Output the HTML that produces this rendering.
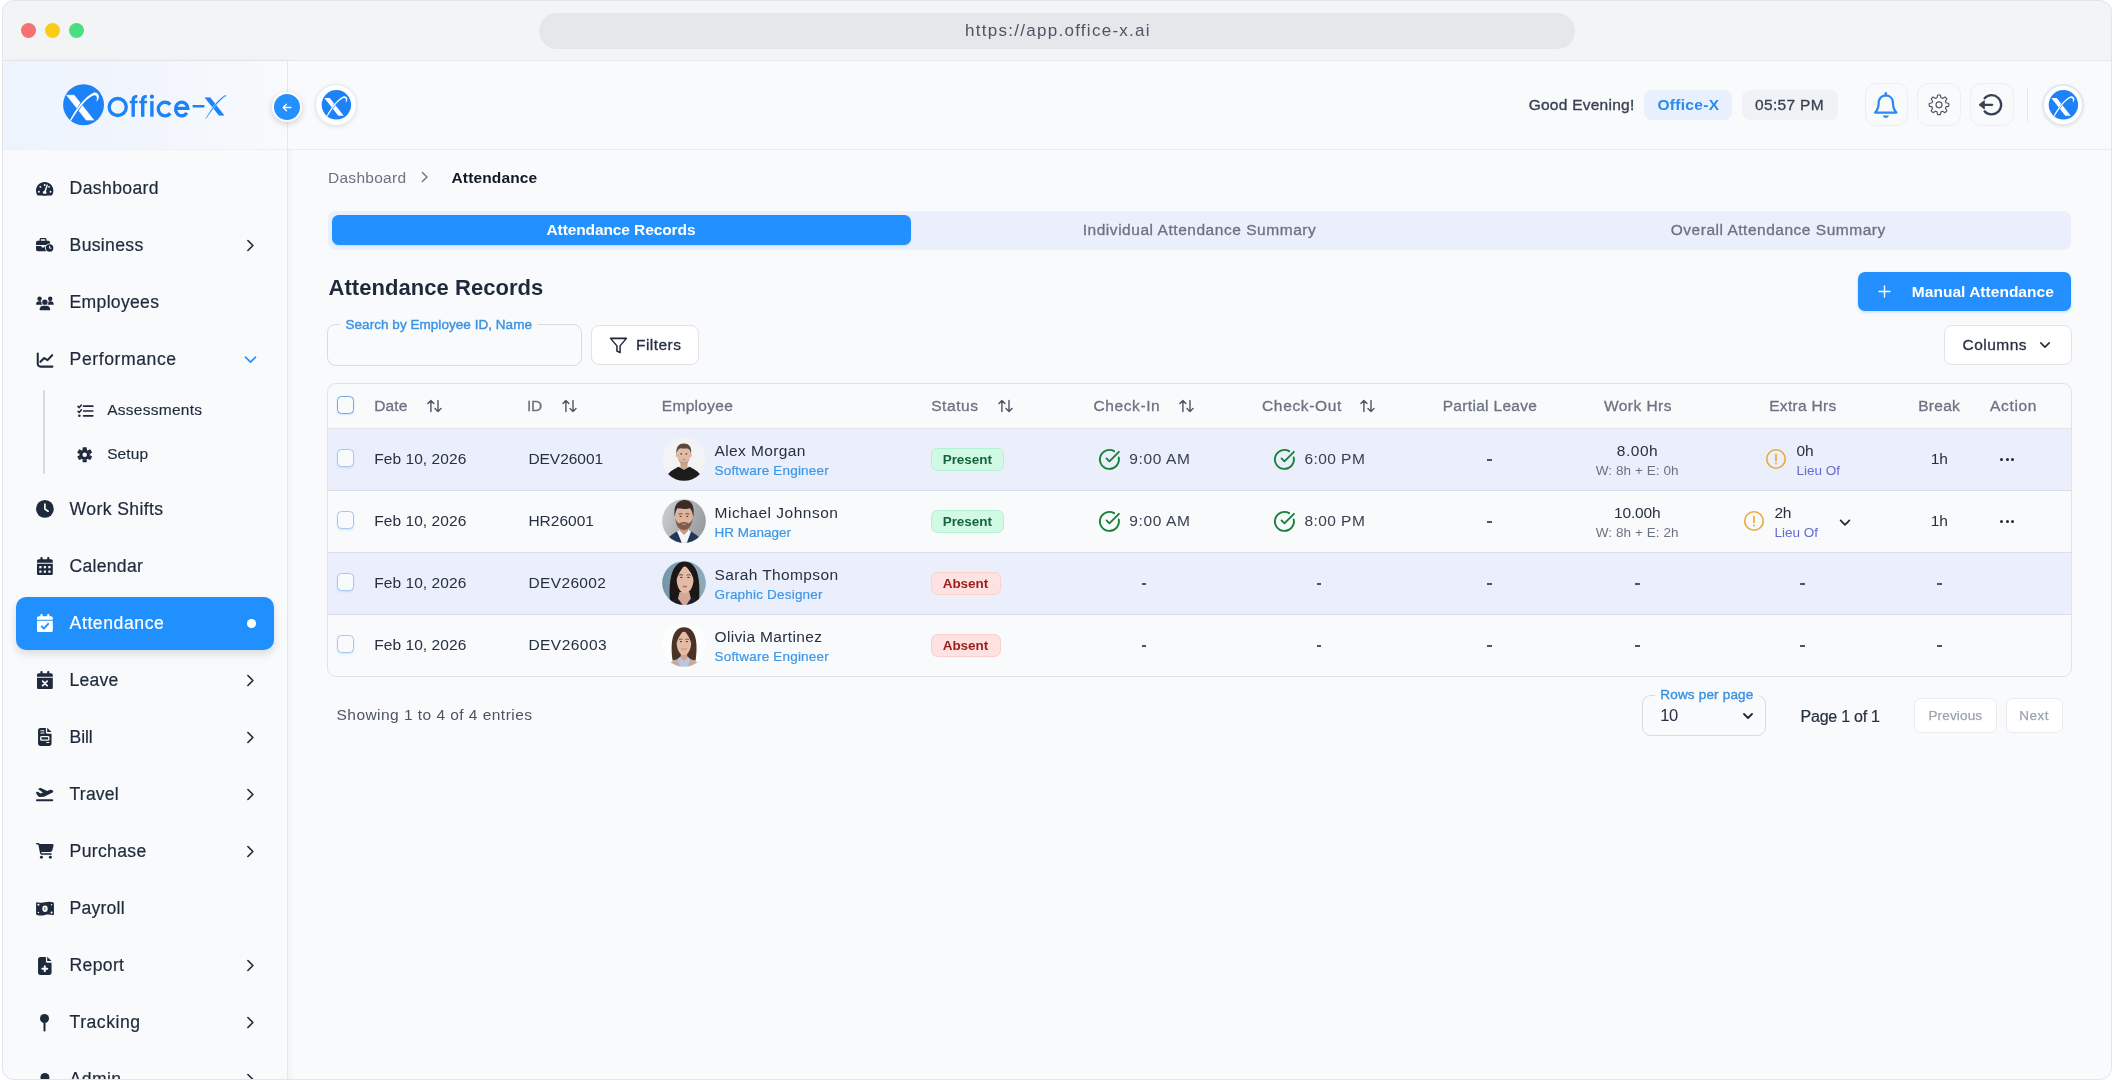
<!DOCTYPE html>
<html lang="en">
<head>
<meta charset="utf-8">
<title>Office-X Attendance</title>
<style>
*{box-sizing:border-box;margin:0;padding:0}
html,body{width:2114px;height:1080px;overflow:hidden;background:#fff}
body{font-family:"Liberation Sans",sans-serif;color:#1e293b;position:relative;-webkit-font-smoothing:antialiased}
.abs{position:absolute}
.t{position:absolute;white-space:nowrap;line-height:1;letter-spacing:.04em}
svg{position:absolute;overflow:visible}
#wrap{position:absolute;left:0;top:0;width:2114px;height:1080px;will-change:transform;transform:translateZ(0)}
/* window */
#bg{position:absolute;left:2px;top:0;width:2110px;height:1080px;background:#f8fafc;border-radius:12px}
#titlebar{position:absolute;left:2px;top:0;width:2110px;height:61px;background:#f3f4f6;border-bottom:1px solid #e5e7eb;border-radius:12px 12px 0 0}
.dot{position:absolute;top:23px;width:15px;height:15px;border-radius:50%}
#url{position:absolute;left:539px;top:13px;width:1036px;height:36px;border-radius:18px;background:#e5e7eb}
#frame{position:absolute;left:2px;top:0;width:2110px;height:1080px;border:1px solid #e2e5ea;border-radius:12px;box-shadow:0 0 0 30px #fff;pointer-events:none;z-index:50}
/* sidebar */
#sidebar{position:absolute;left:3px;top:61px;width:285px;height:1019px;background:#f8fafc;border-right:1px solid #e5e7eb;box-shadow:2px 0 6px rgba(15,23,42,.04)}
#logoarea{position:absolute;left:3px;top:61px;width:284px;height:89px;background:linear-gradient(90deg,#edf4fe 0%,#f1f5fc 45%,#f8fafc 100%);border-bottom:1px solid #eceff3}
#header{position:absolute;left:288px;top:61px;width:1823px;height:89px;background:#f9fafc;border-bottom:1px solid #e9ecf0}
.nav{position:absolute;left:69px;font-size:17px;line-height:20px;white-space:nowrap;color:#1e293b;letter-spacing:.042em}
.sub{position:absolute;left:106px;font-size:15px;line-height:18px;white-space:nowrap;color:#1e293b;letter-spacing:.03em}
.chev{position:absolute;left:243.6px;width:13px;height:13px;margin-top:-.5px}
#active{position:absolute;left:16px;top:597px;width:258px;height:52.5px;border-radius:10px;background:#2190ff;box-shadow:0 4px 9px rgba(15,23,42,.13)}
</style>
</head>
<body>
<div id="wrap">
<div id="bg"></div>
<div id="titlebar">
  <div class="dot" style="left:19px;background:#f87171"></div>
  <div class="dot" style="left:43px;background:#facc15"></div>
  <div class="dot" style="left:67px;background:#4ade80"></div>
</div>
<div id="url"></div>
<div class="t" style="left:965px;top:22px;font-size:17px;color:#4b5563;letter-spacing:.075em">https://app.office-x.ai</div>

<div id="sidebar"></div>
<div id="logoarea"></div>
<div id="header"></div>

<!--SIDEBAR-START-->
<!-- logo -->
<svg style="left:62px;top:84px" width="44" height="44" viewBox="0 0 44 44">
  <circle cx="21.55" cy="20.75" r="20.45" fill="#1d82f8"/>
  <path d="M4.7 11.2 L12.2 11.2 L31.8 36.1 L24.2 36.1 Z" fill="#fff" stroke="#fff" stroke-width=".6" stroke-linejoin="round"/>
  <path d="M9.6 34.4 C12.5 28.6 15 24 18 19.6 C22 14.2 26 10.2 30.6 8.2 L32.4 10.6 C28 12.6 24.5 16 21 20.6 C17.6 25.2 14.6 29.8 11.8 35.2 Z" fill="#1d82f8"/>
  <path d="M7.9 36.3 C11 30 15 24.5 19 19.3 C23 14.5 27 10.8 31 9 C33.5 8 35.8 8.8 36.8 11.6 C37.3 14 36.2 16.4 34.4 18 C35 16 35.2 13.6 34.4 12.2 C33.6 11 32 11 30.2 11.9 C26.5 13.8 23 17.2 20 21 C16 26 12.5 31 9.2 36.6 Z" fill="#fff"/>
</svg>
<svg style="left:107px;top:88px;overflow:hidden" width="119.6" height="36" viewBox="0 0 119.6 36">
  <circle cx="10.72" cy="19" r="8.55" fill="none" stroke="#1d82f8" stroke-width="3.35"/>
  <path d="M24.5 28.7 V12 C24.5 8.5 26.5 6.7 30.3 6.9 V9.7 C28.7 9.5 27.9 10.4 27.9 12.2 V28.7 Z" fill="#1d82f8"/><rect x="22.7" y="12.8" width="7.9" height="2.55" rx=".6" fill="#1d82f8"/>
  <path d="M34 28.7 V12 C34 8.5 36 6.7 39.8 6.9 V9.7 C38.2 9.5 37.4 10.4 37.4 12.2 V28.7 Z" fill="#1d82f8"/><rect x="32.2" y="12.8" width="7.9" height="2.55" rx=".6" fill="#1d82f8"/>
  <rect x="43.2" y="13.1" width="3.4" height="15.6" fill="#1d82f8"/>
  <circle cx="44.95" cy="8.7" r="2.1" fill="#1d82f8"/>
  <path d="M63.26 16.68 A6.8 6.8 0 1 0 63.26 25.42" fill="none" stroke="#1d82f8" stroke-width="3.35"/>
  <path d="M68.53 20.3 H80.87 A6.17 6.82 0 1 0 79.82 24.86" fill="none" stroke="#1d82f8" stroke-width="3.2"/>
  <rect x="85.6" y="17" width="11.85" height="2.6" rx=".5" fill="#1d82f8"/>
  <path d="M98 9.7 L103.3 9.7 L117 27.3 L112 27.3 Z" fill="#1d82f8" stroke="#1d82f8" stroke-width=".5" stroke-linejoin="round"/>
  <path d="M98.2 31.1 C103 22.5 109.5 12.5 117.5 7.2 C118.5 6.7 119.5 7.5 119.7 8.9 C118.9 8.4 118.2 8.5 117.6 8.9 C110.8 14 104.8 22.6 98.9 31.3 Z" fill="#1d82f8" stroke="#f5f8fd" stroke-width=".5"/>
</svg>

<!-- collapse btn + small logo -->
<div class="abs" style="left:272px;top:92px;width:30px;height:30px;border-radius:50%;background:#fff;box-shadow:0 2px 6px rgba(15,23,42,.18);z-index:5"></div>
<div class="abs" style="left:274px;top:94px;width:26px;height:26px;border-radius:50%;background:#2490ff;z-index:6"></div>
<svg style="left:282px;top:103px;z-index:7" width="10" height="9" viewBox="0 0 10 9"><path d="M9 4.5H1.5M4.5 1.2L1.2 4.5l3.3 3.3" fill="none" stroke="#fff" stroke-width="1.3" stroke-linecap="round" stroke-linejoin="round"/></svg>
<div class="abs" style="left:315px;top:84px;width:42px;height:42px;border-radius:50%;background:#fff;border:1px solid #e6e9ef;box-shadow:0 1px 4px rgba(15,23,42,.10)"></div>
<svg style="left:321px;top:89.5px" width="30" height="30" viewBox="0 0 42 42">
  <circle cx="21.55" cy="20.75" r="20.6" fill="#1d82f8"/>
  <path d="M4.7 11.2 L12.2 11.2 L31.8 36.1 L24.2 36.1 Z" fill="#fff"/>
  <path d="M9.6 34.4 C12.5 28.6 15 24 18 19.6 C22 14.2 26 10.2 30.6 8.2 L32.4 10.6 C28 12.6 24.5 16 21 20.6 C17.6 25.2 14.6 29.8 11.8 35.2 Z" fill="#1d82f8"/>
  <path d="M7.9 36.3 C11 30 15 24.5 19 19.3 C23 14.5 27 10.8 31 9 C33.5 8 35.8 8.8 36.8 11.6 C37.3 14 36.2 16.4 34.4 18 C35 16 35.2 13.6 34.4 12.2 C33.6 11 32 11 30.2 11.9 C26.5 13.8 23 17.2 20 21 C16 26 12.5 31 9.2 36.6 Z" fill="#fff"/>
</svg>

<!-- nav text -->
<div class="abs" style="left:42.6px;top:390px;width:2.2px;height:84px;background:#d6dae1;border-radius:1px"></div>
<div id="active"></div>
<div class="abs" style="left:247.3px;top:619.2px;width:8.6px;height:8.6px;border-radius:50%;background:#fff"></div>

<!--NAV-START-->
<div class="t" style="left:69.60px;top:180.20px;font-size:17.6px;color:#1e293b;letter-spacing:0.365px;-webkit-text-stroke:0.2px #1e293b;">Dashboard</div><div class="t" style="left:69.60px;top:237.20px;font-size:17.6px;color:#1e293b;letter-spacing:0.316px;-webkit-text-stroke:0.2px #1e293b;">Business</div><div class="t" style="left:69.60px;top:294.20px;font-size:17.6px;color:#1e293b;letter-spacing:0.294px;-webkit-text-stroke:0.2px #1e293b;">Employees</div><div class="t" style="left:69.60px;top:351.20px;font-size:17.6px;color:#1e293b;letter-spacing:0.578px;-webkit-text-stroke:0.2px #1e293b;">Performance</div><div class="t" style="left:69.60px;top:501.20px;font-size:17.6px;color:#1e293b;letter-spacing:0.388px;-webkit-text-stroke:0.2px #1e293b;">Work Shifts</div><div class="t" style="left:69.60px;top:558.20px;font-size:17.6px;color:#1e293b;letter-spacing:0.256px;-webkit-text-stroke:0.2px #1e293b;">Calendar</div><div class="t" style="left:69.60px;top:615.20px;font-size:17.6px;color:#fff;letter-spacing:0.585px;-webkit-text-stroke:0.2px #fff;">Attendance</div><div class="t" style="left:69.60px;top:672.20px;font-size:17.6px;color:#1e293b;letter-spacing:0.191px;-webkit-text-stroke:0.2px #1e293b;">Leave</div><div class="t" style="left:69.60px;top:729.20px;font-size:17.6px;color:#1e293b;letter-spacing:-0.156px;-webkit-text-stroke:0.2px #1e293b;">Bill</div><div class="t" style="left:69.60px;top:786.20px;font-size:17.6px;color:#1e293b;letter-spacing:0.173px;-webkit-text-stroke:0.2px #1e293b;">Travel</div><div class="t" style="left:69.60px;top:843.20px;font-size:17.6px;color:#1e293b;letter-spacing:0.325px;-webkit-text-stroke:0.2px #1e293b;">Purchase</div><div class="t" style="left:69.60px;top:900.20px;font-size:17.6px;color:#1e293b;letter-spacing:0.203px;-webkit-text-stroke:0.2px #1e293b;">Payroll</div><div class="t" style="left:69.60px;top:957.20px;font-size:17.6px;color:#1e293b;letter-spacing:0.317px;-webkit-text-stroke:0.2px #1e293b;">Report</div><div class="t" style="left:69.60px;top:1014.20px;font-size:17.6px;color:#1e293b;letter-spacing:0.513px;-webkit-text-stroke:0.2px #1e293b;">Tracking</div><div class="t" style="left:69.60px;top:1071.20px;font-size:17.6px;color:#1e293b;letter-spacing:0.406px;-webkit-text-stroke:0.2px #1e293b;">Admin</div><div class="t" style="left:107.20px;top:401.75px;font-size:15.5px;color:#1e293b;letter-spacing:0.263px;-webkit-text-stroke:0.15px #1e293b;">Assessments</div><div class="t" style="left:107.20px;top:445.75px;font-size:15.5px;color:#1e293b;letter-spacing:0.096px;-webkit-text-stroke:0.15px #1e293b;">Setup</div>
<!--NAV-END-->
<!-- chevrons -->
<svg class="chev" style="top:239px" viewBox="0 0 12 12"><path d="M3.6 1.4L8.2 6 3.6 10.6" fill="none" stroke="#1e293b" stroke-width="1.5" stroke-linecap="round" stroke-linejoin="round"/></svg>
<svg class="chev" style="top:353.5px" viewBox="0 0 12 12"><path d="M1.4 3.8L6 8.4 10.6 3.8" fill="none" stroke="#2490ff" stroke-width="1.5" stroke-linecap="round" stroke-linejoin="round"/></svg>
<svg class="chev" style="top:674px" viewBox="0 0 12 12"><path d="M3.6 1.4L8.2 6 3.6 10.6" fill="none" stroke="#1e293b" stroke-width="1.5" stroke-linecap="round" stroke-linejoin="round"/></svg>
<svg class="chev" style="top:731px" viewBox="0 0 12 12"><path d="M3.6 1.4L8.2 6 3.6 10.6" fill="none" stroke="#1e293b" stroke-width="1.5" stroke-linecap="round" stroke-linejoin="round"/></svg>
<svg class="chev" style="top:788px" viewBox="0 0 12 12"><path d="M3.6 1.4L8.2 6 3.6 10.6" fill="none" stroke="#1e293b" stroke-width="1.5" stroke-linecap="round" stroke-linejoin="round"/></svg>
<svg class="chev" style="top:845px" viewBox="0 0 12 12"><path d="M3.6 1.4L8.2 6 3.6 10.6" fill="none" stroke="#1e293b" stroke-width="1.5" stroke-linecap="round" stroke-linejoin="round"/></svg>
<svg class="chev" style="top:959px" viewBox="0 0 12 12"><path d="M3.6 1.4L8.2 6 3.6 10.6" fill="none" stroke="#1e293b" stroke-width="1.5" stroke-linecap="round" stroke-linejoin="round"/></svg>
<svg class="chev" style="top:1016px" viewBox="0 0 12 12"><path d="M3.6 1.4L8.2 6 3.6 10.6" fill="none" stroke="#1e293b" stroke-width="1.5" stroke-linecap="round" stroke-linejoin="round"/></svg>
<svg class="chev" style="top:1073px" viewBox="0 0 12 12"><path d="M3.6 1.4L8.2 6 3.6 10.6" fill="none" stroke="#1e293b" stroke-width="1.5" stroke-linecap="round" stroke-linejoin="round"/></svg>
<!--ICONS-START-->
<!-- Dashboard (gauge) -->
<svg style="left:36.2px;top:181.6px" width="17.4" height="13.6" viewBox="0 32 576 448">
  <path d="M288 32C129 32 0 161 0 320c0 53 14 102 39 145 6 10 16 15 27 15h443c11 0 22-6 27-15C562 422 576 373 576 320 576 161 447 32 288 32z" fill="#1e293b"/>
  <g fill="#f8fafc"><circle cx="288" cy="128" r="32"/><circle cx="96" cy="352" r="32"/><circle cx="144" cy="192" r="32"/><circle cx="432" cy="192" r="32"/><circle cx="480" cy="352" r="32"/>
  <circle cx="288" cy="384" r="62"/><path d="M262 380 L346 128 A24 24 0 0 1 392 144 L314 390 Z"/></g>
  <rect x="226" y="420" width="124" height="60" fill="#1e293b"/>
</svg>
<!-- Business (briefcase + clock) -->
<svg style="left:36.2px;top:238.4px" width="17.6" height="14" viewBox="0 0 640 512">
  <path d="M184 48h144c4 0 8 4 8 8v40H176V56c0-4 4-8 8-8zM128 56v40H64C29 96 0 125 0 160v96h512v-96c0-35-29-64-64-64h-64V56c0-31-25-56-56-56H184c-31 0-56 25-56 56z" fill="#1e293b"/>
  <path d="M0 288h192v24c0 18 14 32 32 32h64c18 0 32-14 32-32v-24h192v128c0 35-29 64-64 64H64c-35 0-64-29-64-64z" fill="#1e293b"/>
  <circle cx="496" cy="368" r="168" fill="#f8fafc"/>
  <circle cx="496" cy="368" r="136" fill="#1e293b"/>
  <path d="M496 300v72h52" fill="none" stroke="#f8fafc" stroke-width="36" stroke-linecap="round" stroke-linejoin="round"/>
</svg>
<!-- Employees (users) -->
<svg style="left:36px;top:295.6px" width="17.8" height="14.2" viewBox="0 0 640 512">
  <g fill="#1e293b">
  <circle cx="128" cy="96" r="80"/><circle cx="512" cy="96" r="80"/>
  <path d="M0 298c0-59 48-106 107-106h42c16 0 31 4 45 10-1 7-2 15-2 22 0 38 17 73 43 96H21c-12 0-21-10-21-22z"/>
  <path d="M640 298c0-59-48-106-107-106h-42c-16 0-31 4-45 10 1 7 2 15 2 22 0 38-17 73-43 96h214c12 0 21-10 21-22z"/>
  <circle cx="320" cy="224" r="96"/>
  <path d="M128 485c0-74 60-133 133-133h118c73 0 133 59 133 133 0 15-12 27-27 27H155c-15 0-27-12-27-27z"/>
  </g>
</svg>
<!-- Performance (chart-line) -->
<svg style="left:35.5px;top:351.5px" width="19" height="16" viewBox="0 0 19 16">
  <path d="M1.75 1.6v10.2a2.8 2.8 0 0 0 2.8 2.8h11.9" fill="none" stroke="#1e293b" stroke-width="2.05" stroke-linecap="round" stroke-linejoin="round"/>
  <path d="M4.4 9.8l3.85-3.75 3.3 2.05 4.6-4.9" fill="none" stroke="#1e293b" stroke-width="2.05" stroke-linecap="round" stroke-linejoin="round"/>
</svg>
<!-- Assessments (list-check) -->
<svg style="left:76.5px;top:403.5px" width="17" height="14" viewBox="0 0 17 14">
  <g fill="none" stroke="#1e293b" stroke-width="1.7" stroke-linecap="round" stroke-linejoin="round">
  <path d="M6.6 2.2h9.2M6.6 7h9.2M6.6 11.8h9.2"/>
  <path d="M1 2.4l1.2 1.2 2.2-2.6M1 7.2l1.2 1.2 2.2-2.6" stroke-width="1.5"/>
  </g>
  <circle cx="2.4" cy="11.8" r="1.25" fill="#1e293b"/>
</svg>
<!-- Setup (gear) -->
<svg style="left:76.8px;top:447.2px" width="15.4" height="15.4" viewBox="-256 -256 512 512">
  <g fill="#1e293b">
    <circle r="172"/>
    <path d="M-62 -250 h124 l14 90 h-152z" transform="rotate(0)"/><path d="M-62 -250 h124 l14 90 h-152z" transform="rotate(60)"/><path d="M-62 -250 h124 l14 90 h-152z" transform="rotate(120)"/><path d="M-62 -250 h124 l14 90 h-152z" transform="rotate(180)"/><path d="M-62 -250 h124 l14 90 h-152z" transform="rotate(240)"/><path d="M-62 -250 h124 l14 90 h-152z" transform="rotate(300)"/>
  </g>
  <circle r="76" fill="#f8fafc"/>
</svg>
<!-- Work shifts (clock) -->
<svg style="left:35.8px;top:500px" width="17.8" height="17.8" viewBox="0 0 512 512">
  <circle cx="256" cy="256" r="256" fill="#1e293b"/>
  <path d="M256 120v140l92 62" fill="none" stroke="#f8fafc" stroke-width="48" stroke-linecap="round" stroke-linejoin="round"/>
</svg>
<!-- Calendar (calendar-days) -->
<svg style="left:37px;top:557.1px" width="15.8" height="18.2" viewBox="0 0 448 512">
  <path d="M128 0c18 0 32 14 32 32v32h128V32c0-18 14-32 32-32s32 14 32 32v32h48c27 0 48 21 48 48v48H0v-48c0-27 21-48 48-48h48V32c0-18 14-32 32-32zM0 192h448v272c0 27-21 48-48 48H48c-27 0-48-21-48-48z" fill="#1e293b"/>
  <g fill="#f8fafc"><rect x="64" y="256" width="64" height="64" rx="10"/><rect x="192" y="256" width="64" height="64" rx="10"/><rect x="320" y="256" width="64" height="64" rx="10"/><rect x="64" y="384" width="64" height="64" rx="10"/><rect x="192" y="384" width="64" height="64" rx="10"/><rect x="320" y="384" width="64" height="64" rx="10"/></g>
</svg>
<!-- Attendance (calendar-check, white) -->
<svg style="left:37px;top:614.1px" width="15.8" height="18.2" viewBox="0 0 448 512">
  <path d="M128 0c18 0 32 14 32 32v32h128V32c0-18 14-32 32-32s32 14 32 32v32h48c27 0 48 21 48 48v48H0v-48c0-27 21-48 48-48h48V32c0-18 14-32 32-32zM0 192h448v272c0 27-21 48-48 48H48c-27 0-48-21-48-48z" fill="#fff"/>
  <path d="M132 348l62 62 124-134" fill="none" stroke="#2490ff" stroke-width="52" stroke-linecap="round" stroke-linejoin="round"/>
</svg>
<!-- Leave (calendar-xmark) -->
<svg style="left:37px;top:671.1px" width="15.8" height="18.2" viewBox="0 0 448 512">
  <path d="M128 0c18 0 32 14 32 32v32h128V32c0-18 14-32 32-32s32 14 32 32v32h48c27 0 48 21 48 48v48H0v-48c0-27 21-48 48-48h48V32c0-18 14-32 32-32zM0 192h448v272c0 27-21 48-48 48H48c-27 0-48-21-48-48z" fill="#1e293b"/>
  <path d="M160 288l128 128M288 288L160 416" fill="none" stroke="#f8fafc" stroke-width="50" stroke-linecap="round"/>
</svg>
<!-- Bill (file-invoice) -->
<svg style="left:38px;top:727.6px" width="13.6" height="18" viewBox="0 0 384 512">
  <path d="M64 0C29 0 0 29 0 64v384c0 35 29 64 64 64h256c35 0 64-29 64-64V160H256c-18 0-32-14-32-32V0z" fill="#1e293b"/>
  <path d="M256 0v128h128z" fill="#1e293b" transform="translate(14 -6) scale(.96)"/>
  <g fill="#f8fafc"><rect x="64" y="64" width="120" height="30" rx="15"/><rect x="64" y="128" width="120" height="30" rx="15"/><rect x="232" y="400" width="90" height="30" rx="15"/></g>
  <rect x="78" y="246" width="228" height="100" rx="22" fill="none" stroke="#f8fafc" stroke-width="38"/>
</svg>
<!-- Travel (plane-departure) -->
<svg style="left:36px;top:788px" width="17.4" height="14" viewBox="0 0 17.4 14">
  <g fill="#1e293b">
  <path d="M3.1 8.9 L1.2 6.9 L0.1 4.9 C-0.1 4.5 0.2 4.1 0.6 4 L1.6 3.7 C1.9 3.6 2.2 3.7 2.4 3.9 L4.2 5.4 L7 4.4 L2.6 1.6 C2.2 1.3 2.3 0.8 2.7 0.6 L4.2 0.1 C4.6 0 5 0 5.3 0.2 L11.2 2.9 L13.6 2 C14.8 1.6 16.2 1.8 17 2.7 C17.5 3.3 17.3 4.1 16.6 4.5 L8.6 8.4 C8.2 8.6 7.8 8.7 7.4 8.7 L3.9 9.1 C3.6 9.1 3.3 9.1 3.1 8.9 Z"/>
  <rect x="0" y="11.2" width="17.2" height="2.1" rx="1.05"/>
  </g>
</svg>
<!-- Purchase (cart) -->
<svg style="left:35.8px;top:843px" width="17.8" height="15.8" viewBox="0 0 576 512">
  <g fill="#1e293b">
  <path d="M0 24C0 11 11 0 24 0h46c22 0 41 13 50 32h411c26 0 45 25 38 50l-41 152c-8 32-37 54-70 54H170l5 28c2 11 12 20 24 20h289c13 0 24 11 24 24s-11 24-24 24H199c-35 0-64-25-71-58L77 55c-1-4-4-7-8-7H24C11 48 0 37 0 24z"/>
  <circle cx="176" cy="464" r="48"/><circle cx="464" cy="464" r="48"/>
  </g>
</svg>
<!-- Payroll (money bill) -->
<svg style="left:35.8px;top:901.8px" width="18" height="13.4" viewBox="0 0 576 432">
  <path d="M0 40c0-20 16-34 36-30 90 20 170 26 252 2 84-24 168-26 256-2 19 5 32 22 32 42v340c0 20-16 34-36 30-90-20-170-26-252-2-84 24-168 26-256 2C13 417 0 400 0 380z" fill="#1e293b"/>
  <ellipse cx="288" cy="216" rx="86" ry="104" fill="#f8fafc"/>
  <path d="M272 168h24v96h-24z M262 176l22-14v20z" fill="#1e293b"/>
  <g fill="#f8fafc"><circle cx="76" cy="90" r="34"/><circle cx="500" cy="342" r="34"/><circle cx="76" cy="342" r="24"/><circle cx="500" cy="90" r="24"/></g>
</svg>
<!-- Report (file-medical) -->
<svg style="left:38px;top:956.6px" width="13.6" height="18" viewBox="0 0 384 512">
  <path d="M64 0C29 0 0 29 0 64v384c0 35 29 64 64 64h256c35 0 64-29 64-64V160H256c-18 0-32-14-32-32V0z" fill="#1e293b"/>
  <path d="M256 0v128h128z" fill="#1e293b" transform="translate(14 -6) scale(.96)"/>
  <path d="M192 262v140M122 332h140" stroke="#f8fafc" stroke-width="56" stroke-linecap="round" fill="none"/>
</svg>
<!-- Tracking (map-pin) -->
<svg style="left:40px;top:1013.8px" width="9" height="18" viewBox="0 0 320 640">
  <circle cx="160" cy="160" r="160" fill="#1e293b"/>
  <rect x="124" y="300" width="72" height="320" rx="36" fill="#1e293b"/>
</svg>
<!-- Admin (user) -->
<svg style="left:37px;top:1072.6px" width="15.8" height="18" viewBox="0 0 448 512">
  <circle cx="224" cy="128" r="128" fill="#1e293b"/>
  <path d="M0 482c0-98 80-178 178-178h92c98 0 178 80 178 178 0 16-13 30-30 30H30c-17 0-30-14-30-30z" fill="#1e293b"/>
</svg>
<!--ICONS-END-->
<!--SIDEBAR-END-->
<!--HEADER-START-->
<div class="t" style="left:1528.70px;top:96.75px;font-size:15.5px;color:#374151;letter-spacing:0.246px;-webkit-text-stroke:0.35px #374151;">Good Evening!</div><div class="abs" style="left:1644px;top:89.5px;width:88px;height:30.5px;border-radius:8px;background:#e8f0fd"></div><div class="t" style="left:1657.40px;top:96.75px;font-size:15.5px;color:#2b8af0;letter-spacing:0.309px;font-weight:700;">Office-X</div><div class="abs" style="left:1741.5px;top:89.5px;width:96.5px;height:30.5px;border-radius:8px;background:#f0f2f6"></div><div class="t" style="left:1755.00px;top:96.75px;font-size:15.5px;color:#374151;letter-spacing:0.334px;-webkit-text-stroke:0.3px #374151;">05:57 PM</div><div class="abs" style="left:1864.5px;top:83px;width:43.4px;height:43.4px;border-radius:11px;background:#f9fafc;border:1px solid #eceff3"></div><div class="abs" style="left:1917.3px;top:83px;width:43.4px;height:43.4px;border-radius:11px;background:#f9fafc;border:1px solid #eceff3"></div><div class="abs" style="left:1970.2px;top:83px;width:43.4px;height:43.4px;border-radius:11px;background:#f9fafc;border:1px solid #eceff3"></div><svg style="left:1873.3px;top:92px" width="25.6" height="27.6" viewBox="0 0 25.6 27.6">
<path d="M12.8 3.4 C8.2 3.4 5.6 7 5.6 11.2 C5.6 16.2 4 18.6 2.2 20.6 H23.4 C21.6 18.6 20 16.2 20 11.2 C20 7 17.4 3.4 12.8 3.4 Z" fill="none" stroke="#2b8af0" stroke-width="2.3" stroke-linejoin="round"/>
<path d="M12.8 3.2 V1.4" stroke="#2b8af0" stroke-width="2.6" stroke-linecap="round"/>
<path d="M9.6 23.6 A3.3 3.3 0 0 0 16 23.6 Z" fill="#2b8af0"/>
</svg><svg style="left:1928px;top:94px" width="22" height="22" viewBox="0 0 22 22">
<path d="M8.96 3.79 L9.68 0.99 L12.32 0.99 L13.04 3.79 A7.3 7.3 0 0 1 14.52 4.40 L14.52 4.40 L17.01 2.93 L18.87 4.79 L17.40 7.28 A7.3 7.3 0 0 1 18.01 8.76 L18.01 8.76 L20.81 9.48 L20.81 12.12 L18.01 12.84 A7.3 7.3 0 0 1 17.40 14.32 L17.40 14.32 L18.87 16.81 L17.01 18.67 L14.52 17.20 A7.3 7.3 0 0 1 13.04 17.81 L13.04 17.81 L12.32 20.61 L9.68 20.61 L8.96 17.81 A7.3 7.3 0 0 1 7.48 17.20 L7.48 17.20 L4.99 18.67 L3.13 16.81 L4.60 14.32 A7.3 7.3 0 0 1 3.99 12.84 L3.99 12.84 L1.19 12.12 L1.19 9.48 L3.99 8.76 A7.3 7.3 0 0 1 4.60 7.28 L4.60 7.28 L3.13 4.79 L4.99 2.93 L7.48 4.40 A7.3 7.3 0 0 1 8.96 3.79 Z" fill="none" stroke="#4b5563" stroke-width="1.15" stroke-linejoin="round"/>
<circle cx="11" cy="10.8" r="3" fill="none" stroke="#4b5563" stroke-width="1.15"/>
</svg><svg style="left:1978px;top:93px" width="26" height="24" viewBox="0 0 26 24">
<path d="M6.6 5.2 A9.6 9.6 0 1 1 6.6 18.4" fill="none" stroke="#374151" stroke-width="2.3" stroke-linecap="round"/>
<path d="M5.5 11.8 H14.2" stroke="#374151" stroke-width="2.3" stroke-linecap="round"/>
<path d="M1 11.8 L6.4 7.6 V16 Z" fill="#374151" stroke="#374151" stroke-width="0.8" stroke-linejoin="round"/>
</svg><div class="abs" style="left:2027px;top:87px;width:1px;height:36px;background:#e5e7eb"></div><div class="abs" style="left:2041.5px;top:83.5px;width:42.6px;height:42.6px;border-radius:50%;background:#fff;border:2px solid #e3e8f0;box-shadow:0 1px 3px rgba(15,23,42,.08)"></div><svg style="left:2047.8px;top:89.8px" width="30" height="30" viewBox="0 0 42 42">
  <circle cx="21.55" cy="20.75" r="20.6" fill="#1d82f8"/>
  <path d="M4.7 11.2 L12.2 11.2 L31.8 36.1 L24.2 36.1 Z" fill="#fff"/>
  <path d="M9.6 34.4 C12.5 28.6 15 24 18 19.6 C22 14.2 26 10.2 30.6 8.2 L32.4 10.6 C28 12.6 24.5 16 21 20.6 C17.6 25.2 14.6 29.8 11.8 35.2 Z" fill="#1d82f8"/>
  <path d="M7.9 36.3 C11 30 15 24.5 19 19.3 C23 14.5 27 10.8 31 9 C33.5 8 35.8 8.8 36.8 11.6 C37.3 14 36.2 16.4 34.4 18 C35 16 35.2 13.6 34.4 12.2 C33.6 11 32 11 30.2 11.9 C26.5 13.8 23 17.2 20 21 C16 26 12.5 31 9.2 36.6 Z" fill="#fff"/>
</svg>
<!--HEADER-END-->
<!--MAIN-START-->
<div class="t" style="left:328.00px;top:169.75px;font-size:15.5px;color:#6b7280;letter-spacing:0.271px;">Dashboard</div><svg style="left:419px;top:171px" width="12" height="12" viewBox="0 0 12 12"><path d="M3.4 1.6L8 6 3.4 10.4" fill="none" stroke="#6b7280" stroke-width="1.4" stroke-linecap="round" stroke-linejoin="round"/></svg><div class="t" style="left:451.50px;top:169.75px;font-size:15.5px;color:#111827;letter-spacing:0.144px;font-weight:700;">Attendance</div><div class="abs" style="left:327.6px;top:211px;width:1743.4px;height:38.7px;border-radius:8px;background:#ebeffb"></div><div class="abs" style="left:331.7px;top:215px;width:579px;height:30.4px;border-radius:6.5px;background:#2291fd;box-shadow:0 1px 2px rgba(36,144,255,.18)"></div><div class="t" style="left:546.50px;top:221.75px;font-size:15.5px;color:#fff;letter-spacing:-0.102px;font-weight:700;">Attendance Records</div><div class="t" style="left:1082.70px;top:221.75px;font-size:15.5px;color:#6b7280;letter-spacing:0.540px;-webkit-text-stroke:0.3px #6b7280;">Individual Attendance Summary</div><div class="t" style="left:1670.75px;top:221.75px;font-size:15.5px;color:#6b7280;letter-spacing:0.516px;-webkit-text-stroke:0.3px #6b7280;">Overall Attendance Summary</div><div class="t" style="left:328.50px;top:276.50px;font-size:22px;color:#1e293b;letter-spacing:0.050px;font-weight:700;">Attendance Records</div><div class="abs" style="left:1858.4px;top:272px;width:213px;height:39px;border-radius:7px;background:#2490ff;box-shadow:0 1px 3px rgba(36,144,255,.3)"></div><svg style="left:1878.3px;top:285px" width="13" height="13" viewBox="0 0 13 13"><path d="M6.5 1v11M1 6.5h11" stroke="#fff" stroke-width="1.4" stroke-linecap="round"/></svg><div class="t" style="left:1911.80px;top:283.75px;font-size:15.5px;color:#fff;letter-spacing:0.029px;font-weight:700;">Manual Attendance</div><div class="abs" style="left:327.2px;top:324.1px;width:254.8px;height:41.6px;border-radius:8.5px;border:1.2px solid #d7dbe1;background:#f8fafc"></div><div class="abs" style="left:339.5px;top:322px;width:198.5px;height:6px;background:#f8fafc"></div><div class="t" style="left:345.50px;top:317.75px;font-size:13.5px;color:#3b92e2;letter-spacing:0.044px;-webkit-text-stroke:0.4px #3b92e2;">Search by Employee ID, Name</div><div class="abs" style="left:591px;top:325.2px;width:107.8px;height:39.6px;border-radius:8px;border:1px solid #dfe2e7;background:#fff"></div><svg style="left:609.3px;top:336.3px" width="19" height="19" viewBox="0 0 24 24"><path d="M22 3H2l8 9.46V19l4 2v-8.54z" fill="none" stroke="#1f2937" stroke-width="1.9" stroke-linejoin="round" stroke-linecap="round"/></svg><div class="t" style="left:636.00px;top:336.75px;font-size:15.5px;color:#253041;letter-spacing:0.466px;-webkit-text-stroke:0.3px #253041;">Filters</div><div class="abs" style="left:1944.2px;top:325.4px;width:127.6px;height:39.6px;border-radius:8px;border:1px solid #e2e5ea;background:#fff"></div><div class="t" style="left:1962.50px;top:336.75px;font-size:15.5px;color:#253041;letter-spacing:0.471px;-webkit-text-stroke:0.3px #253041;">Columns</div><svg style="left:2038.6px;top:339.4px" width="12" height="12" viewBox="0 0 12 12"><path d="M1.8 3.9L6 8.1l4.2-4.2" fill="none" stroke="#1f2937" stroke-width="1.5" stroke-linecap="round" stroke-linejoin="round"/></svg><div class="abs" style="left:327.2px;top:383.4px;width:1744.4px;height:293.8px;border-radius:9px;border:1px solid #dfe3ea;background:#f8fafc;overflow:hidden"><div class="abs" style="left:0;top:44.0px;width:1744px;height:1px;background:#dfe3ea"></div><div class="abs" style="left:0;top:44.6px;width:1744px;height:61.5px;background:#ebeffc"></div><div class="abs" style="left:0;top:106.0px;width:1744px;height:1px;background:#d9dee8"></div><div class="abs" style="left:0;top:168.0px;width:1744px;height:1px;background:#d9dee8"></div><div class="abs" style="left:0;top:168.6px;width:1744px;height:61.5px;background:#ebeffc"></div><div class="abs" style="left:0;top:230.0px;width:1744px;height:1px;background:#d9dee8"></div></div><div class="abs" style="left:336.7px;top:396px;width:17.6px;height:17.6px;border-radius:4.5px;border:1.4px solid #6fa9e6;background:#f8fafc;box-shadow:0 1px 2px rgba(36,144,255,.18)"></div><div class="t" style="left:374.20px;top:397.75px;font-size:15.5px;color:#6b7280;letter-spacing:0.150px;-webkit-text-stroke:0.3px #6b7280;">Date</div><svg style="left:426.8px;top:398.8px" width="15" height="14" viewBox="0 0 15 14"><path d="M3.9 12.6V1.4M0.9 4.4l3-3 3 3M11 1.4v11.2M8 9.6l3 3 3-3" fill="none" stroke="#4b5563" stroke-width="1.4" stroke-linecap="round" stroke-linejoin="round"/></svg><div class="t" style="left:527.00px;top:397.75px;font-size:15.5px;color:#6b7280;letter-spacing:-0.250px;-webkit-text-stroke:0.3px #6b7280;">ID</div><svg style="left:562.2px;top:398.8px" width="15" height="14" viewBox="0 0 15 14"><path d="M3.9 12.6V1.4M0.9 4.4l3-3 3 3M11 1.4v11.2M8 9.6l3 3 3-3" fill="none" stroke="#4b5563" stroke-width="1.4" stroke-linecap="round" stroke-linejoin="round"/></svg><div class="t" style="left:661.80px;top:397.75px;font-size:15.5px;color:#6b7280;letter-spacing:0.295px;-webkit-text-stroke:0.3px #6b7280;">Employee</div><div class="t" style="left:931.20px;top:397.75px;font-size:15.5px;color:#6b7280;letter-spacing:0.569px;-webkit-text-stroke:0.3px #6b7280;">Status</div><svg style="left:997.6px;top:398.8px" width="15" height="14" viewBox="0 0 15 14"><path d="M3.9 12.6V1.4M0.9 4.4l3-3 3 3M11 1.4v11.2M8 9.6l3 3 3-3" fill="none" stroke="#4b5563" stroke-width="1.4" stroke-linecap="round" stroke-linejoin="round"/></svg><div class="t" style="left:1093.60px;top:397.75px;font-size:15.5px;color:#6b7280;letter-spacing:0.581px;-webkit-text-stroke:0.3px #6b7280;">Check-In</div><svg style="left:1179.2px;top:398.8px" width="15" height="14" viewBox="0 0 15 14"><path d="M3.9 12.6V1.4M0.9 4.4l3-3 3 3M11 1.4v11.2M8 9.6l3 3 3-3" fill="none" stroke="#4b5563" stroke-width="1.4" stroke-linecap="round" stroke-linejoin="round"/></svg><div class="t" style="left:1262.00px;top:397.75px;font-size:15.5px;color:#6b7280;letter-spacing:0.663px;-webkit-text-stroke:0.3px #6b7280;">Check-Out</div><svg style="left:1360.4px;top:398.8px" width="15" height="14" viewBox="0 0 15 14"><path d="M3.9 12.6V1.4M0.9 4.4l3-3 3 3M11 1.4v11.2M8 9.6l3 3 3-3" fill="none" stroke="#4b5563" stroke-width="1.4" stroke-linecap="round" stroke-linejoin="round"/></svg><div class="t" style="left:1442.70px;top:397.75px;font-size:15.5px;color:#6b7280;letter-spacing:0.318px;-webkit-text-stroke:0.3px #6b7280;">Partial Leave</div><div class="t" style="left:1604.00px;top:397.75px;font-size:15.5px;color:#6b7280;letter-spacing:0.443px;-webkit-text-stroke:0.3px #6b7280;">Work Hrs</div><div class="t" style="left:1769.20px;top:397.75px;font-size:15.5px;color:#6b7280;letter-spacing:0.313px;-webkit-text-stroke:0.3px #6b7280;">Extra Hrs</div><div class="t" style="left:1918.20px;top:397.75px;font-size:15.5px;color:#6b7280;letter-spacing:0.275px;-webkit-text-stroke:0.3px #6b7280;">Break</div><div class="t" style="left:1990.00px;top:397.75px;font-size:15.5px;color:#6b7280;letter-spacing:0.661px;-webkit-text-stroke:0.3px #6b7280;">Action</div><div class="abs" style="left:336.7px;top:449.3px;width:17.6px;height:17.6px;border-radius:4.5px;border:1.4px solid #a5c9ee;background:#f8fafc;box-shadow:0 1px 2px rgba(36,144,255,.18)"></div><div class="t" style="left:374.20px;top:450.75px;font-size:15.5px;color:#253041;letter-spacing:0.067px;">Feb 10, 2026</div><div class="t" style="left:528.40px;top:450.75px;font-size:15.5px;color:#253041;letter-spacing:-0.041px;">DEV26001</div><svg style="left:661.9px;top:437.3px" width="44" height="44" viewBox="0 0 44 44"><defs><clipPath id="avc0"><circle cx="22" cy="22" r="21.85"/></clipPath><filter id="avb0" x="-10%" y="-10%" width="120%" height="120%"><feGaussianBlur stdDeviation="0.6"/></filter></defs><g clip-path="url(#avc0)"><rect width="44" height="44" fill="#f3f3f5"/><g filter="url(#avb0)">
<path d="M3 48 C3.5 38 7 34.6 16.4 29.8 L22 32.6 L27.6 29.8 C37 34.6 40.5 38 41 48 Z" fill="#1a1a1c"/>
<path d="M18.4 25 H25.6 V30.4 L22 33 L18.4 30.4 Z" fill="#cfa48f"/>
<ellipse cx="21.8" cy="17.8" rx="6.6" ry="9.4" fill="#e0bba7"/>
<ellipse cx="14.9" cy="18.4" rx="1" ry="1.8" fill="#d8ac98"/><ellipse cx="28.7" cy="18.4" rx="1" ry="1.8" fill="#d8ac98"/>
<path d="M14.6 17.2 C13.4 9.6 17.2 6.4 21.8 6.4 C26.6 6.4 30.2 9.6 29 17.2 C28.4 13.6 27.2 11.8 25.4 11.4 C23 11.8 20 11.6 18.2 11.2 C16.4 12 15.2 13.8 14.6 17.2 Z" fill="#5b4737"/>
<path d="M16.4 21.6 C17 26.4 19.4 27.6 21.8 27.6 C24.2 27.6 26.6 26.4 27.2 21.6 C26 24.4 24.2 25 21.8 25 C19.4 25 17.6 24.4 16.4 21.6 Z" fill="#b08672" opacity=".55"/>
<ellipse cx="19.2" cy="16.9" rx="1" ry=".6" fill="#4a372e"/><ellipse cx="24.4" cy="16.9" rx="1" ry=".6" fill="#4a372e"/>
<path d="M20.2 22.7 H23.4" stroke="#a3705f" stroke-width=".7"/>
</g></g></svg><div class="t" style="left:714.50px;top:442.75px;font-size:15.5px;color:#253041;letter-spacing:0.398px;">Alex Morgan</div><div class="t" style="left:714.50px;top:463.75px;font-size:13.5px;color:#3d97e8;letter-spacing:0.195px;-webkit-text-stroke:0.2px #3d97e8;">Software Engineer</div><div class="abs" style="left:931.1px;top:448.0px;width:72.6px;height:23px;border-radius:6.5px;background:#d1fae5;border:1px solid #b4f0d2"></div><div class="t" style="left:942.70px;top:452.75px;font-size:13.5px;color:#17653a;letter-spacing:-0.039px;font-weight:700;">Present</div><svg style="left:1097.6px;top:447.9px" width="22.8" height="22.8" viewBox="0 0 24 24"><path d="M21.801 10A10 10 0 1 1 17 3.335" fill="none" stroke="#17803a" stroke-width="2" stroke-linecap="round" stroke-linejoin="round"/><path d="m9 11 3 3L22 4" fill="none" stroke="#17803a" stroke-width="2" stroke-linecap="round" stroke-linejoin="round"/></svg><div class="t" style="left:1129.30px;top:450.75px;font-size:15.5px;color:#374151;letter-spacing:0.638px;">9:00 AM</div><svg style="left:1272.6px;top:447.9px" width="22.8" height="22.8" viewBox="0 0 24 24"><path d="M21.801 10A10 10 0 1 1 17 3.335" fill="none" stroke="#17803a" stroke-width="2" stroke-linecap="round" stroke-linejoin="round"/><path d="m9 11 3 3L22 4" fill="none" stroke="#17803a" stroke-width="2" stroke-linecap="round" stroke-linejoin="round"/></svg><div class="t" style="left:1304.50px;top:450.75px;font-size:15.5px;color:#374151;letter-spacing:0.428px;">6:00 PM</div><div class="abs" style="left:1487.2px;top:459.2px;width:4.7px;height:1.6px;background:#4b5563"></div><div class="t" style="left:1616.85px;top:442.75px;font-size:15.5px;color:#253041;letter-spacing:0.526px;">8.00h</div><div class="t" style="left:1595.80px;top:463.75px;font-size:13.5px;color:#6b7280;letter-spacing:0.072px;">W: 8h + E: 0h</div><svg style="left:1764.8px;top:448.1px" width="22" height="22" viewBox="0 0 22 22"><circle cx="11" cy="11" r="9.25" fill="none" stroke="#eaa93c" stroke-width="1.65"/><path d="M11 6.6v6" stroke="#eaa93c" stroke-width="1.7" stroke-linecap="round"/><circle cx="11" cy="15.6" r="1" fill="#eaa93c"/></svg><div class="t" style="left:1796.40px;top:442.75px;font-size:15.5px;color:#253041;letter-spacing:0.050px;">0h</div><div class="t" style="left:1796.40px;top:463.75px;font-size:13.5px;color:#6569d6;letter-spacing:0.011px;">Lieu Of</div><div class="t" style="left:1930.80px;top:450.75px;font-size:15.5px;color:#253041;letter-spacing:-0.250px;">1h</div><div class="abs" style="left:2000px;top:457.95px;width:3.1px;height:3.1px;border-radius:50%;background:#1f2937"></div><div class="abs" style="left:2005.5px;top:457.95px;width:3.1px;height:3.1px;border-radius:50%;background:#1f2937"></div><div class="abs" style="left:2011px;top:457.95px;width:3.1px;height:3.1px;border-radius:50%;background:#1f2937"></div><div class="abs" style="left:336.7px;top:511.3px;width:17.6px;height:17.6px;border-radius:4.5px;border:1.4px solid #a5c9ee;background:#f8fafc;box-shadow:0 1px 2px rgba(36,144,255,.18)"></div><div class="t" style="left:374.20px;top:512.75px;font-size:15.5px;color:#253041;letter-spacing:0.067px;">Feb 10, 2026</div><div class="t" style="left:528.40px;top:512.75px;font-size:15.5px;color:#253041;letter-spacing:0.000px;">HR26001</div><svg style="left:661.9px;top:499.3px" width="44" height="44" viewBox="0 0 44 44"><defs><clipPath id="avc1"><circle cx="22" cy="22" r="21.85"/></clipPath><filter id="avb1" x="-10%" y="-10%" width="120%" height="120%"><feGaussianBlur stdDeviation="0.6"/></filter><linearGradient id="avg1" x1="0" y1="0" x2="1" y2=".4"><stop offset="0" stop-color="#cfd1d2"/><stop offset=".5" stop-color="#b4b6b8"/><stop offset="1" stop-color="#9c9fa2"/></linearGradient></defs><g clip-path="url(#avc1)"><rect width="44" height="44" fill="url(#avg1)"/><g filter="url(#avb1)">
<path d="M2 48 C3 40 7 37.6 14.6 32.4 L22 43 L29.4 32.4 C37 37.6 41 40 42 48 Z" fill="#21355a"/>
<path d="M15.4 33 L20.6 46 H24 L28.9 33 L25.6 30 H18.8 Z" fill="#f2f4f7"/>
<path d="M18 26 H26 V32 L22 36 L18 32 Z" fill="#c89a84"/>
<ellipse cx="21.9" cy="18.6" rx="8.6" ry="11.6" fill="#e0b39b"/>
<path d="M12.8 18 C11 7.5 15 1.2 22.6 1 C29.6 1 33 7 31.2 18 C30.6 13 29.6 10.4 28 9.2 C24.6 10.4 18.6 10 15.8 9 C14 10.8 13.2 13.6 12.8 18 Z" fill="#3a2c25"/>
<path d="M13.4 19.6 C13.8 27.8 17.6 31 21.9 31 C26.2 31 30 27.8 30.4 19.6 C29.4 22.8 28 24 26.4 24.4 C24.8 22.4 19 22.4 17.4 24.4 C15.8 24 14.4 22.8 13.4 19.6 Z" fill="#7a5544" opacity=".92"/>
<path d="M19.4 24.6 C20.6 25.8 23.2 25.8 24.4 24.6 C23.2 25 20.6 25 19.4 24.6 Z" fill="#f3e6e1"/>
<ellipse cx="18.6" cy="17.2" rx="1.1" ry=".55" fill="#2d201b"/><ellipse cx="25.2" cy="17.2" rx="1.1" ry=".55" fill="#2d201b"/>
<path d="M16.6 15.2 C17.8 14.6 19.4 14.6 20.4 15 M23.4 15 C24.4 14.6 26 14.6 27.2 15.2" stroke="#3a2c25" stroke-width=".8" fill="none"/>
</g></g></svg><div class="t" style="left:714.50px;top:504.75px;font-size:15.5px;color:#253041;letter-spacing:0.512px;">Michael Johnson</div><div class="t" style="left:714.50px;top:525.75px;font-size:13.5px;color:#3d97e8;letter-spacing:-0.003px;-webkit-text-stroke:0.2px #3d97e8;">HR Manager</div><div class="abs" style="left:931.1px;top:510.0px;width:72.6px;height:23px;border-radius:6.5px;background:#d1fae5;border:1px solid #b4f0d2"></div><div class="t" style="left:942.70px;top:514.75px;font-size:13.5px;color:#17653a;letter-spacing:-0.039px;font-weight:700;">Present</div><svg style="left:1097.6px;top:509.9px" width="22.8" height="22.8" viewBox="0 0 24 24"><path d="M21.801 10A10 10 0 1 1 17 3.335" fill="none" stroke="#17803a" stroke-width="2" stroke-linecap="round" stroke-linejoin="round"/><path d="m9 11 3 3L22 4" fill="none" stroke="#17803a" stroke-width="2" stroke-linecap="round" stroke-linejoin="round"/></svg><div class="t" style="left:1129.30px;top:512.75px;font-size:15.5px;color:#374151;letter-spacing:0.638px;">9:00 AM</div><svg style="left:1272.6px;top:509.9px" width="22.8" height="22.8" viewBox="0 0 24 24"><path d="M21.801 10A10 10 0 1 1 17 3.335" fill="none" stroke="#17803a" stroke-width="2" stroke-linecap="round" stroke-linejoin="round"/><path d="m9 11 3 3L22 4" fill="none" stroke="#17803a" stroke-width="2" stroke-linecap="round" stroke-linejoin="round"/></svg><div class="t" style="left:1304.50px;top:512.75px;font-size:15.5px;color:#374151;letter-spacing:0.428px;">8:00 PM</div><div class="abs" style="left:1487.2px;top:521.2px;width:4.7px;height:1.6px;background:#4b5563"></div><div class="t" style="left:1613.95px;top:504.75px;font-size:15.5px;color:#253041;letter-spacing:-0.144px;">10.00h</div><div class="t" style="left:1595.80px;top:525.75px;font-size:13.5px;color:#6b7280;letter-spacing:0.072px;">W: 8h + E: 2h</div><svg style="left:1742.8px;top:510.29999999999995px" width="22" height="22" viewBox="0 0 22 22"><circle cx="11" cy="11" r="9.25" fill="none" stroke="#eaa93c" stroke-width="1.65"/><path d="M11 6.6v6" stroke="#eaa93c" stroke-width="1.7" stroke-linecap="round"/><circle cx="11" cy="15.6" r="1" fill="#eaa93c"/></svg><div class="t" style="left:1774.40px;top:504.75px;font-size:15.5px;color:#253041;letter-spacing:-0.250px;">2h</div><div class="t" style="left:1774.40px;top:525.75px;font-size:13.5px;color:#6569d6;letter-spacing:0.011px;">Lieu Of</div><svg style="left:1838.6px;top:517.3px" width="12" height="12" viewBox="0 0 12 12"><path d="M1.6 3.4L6 7.8l4.4-4.4" fill="none" stroke="#1f2937" stroke-width="1.7" stroke-linecap="round" stroke-linejoin="round"/></svg><div class="t" style="left:1930.80px;top:512.75px;font-size:15.5px;color:#253041;letter-spacing:-0.250px;">1h</div><div class="abs" style="left:2000px;top:519.95px;width:3.1px;height:3.1px;border-radius:50%;background:#1f2937"></div><div class="abs" style="left:2005.5px;top:519.95px;width:3.1px;height:3.1px;border-radius:50%;background:#1f2937"></div><div class="abs" style="left:2011px;top:519.95px;width:3.1px;height:3.1px;border-radius:50%;background:#1f2937"></div><div class="abs" style="left:336.7px;top:573.3px;width:17.6px;height:17.6px;border-radius:4.5px;border:1.4px solid #a5c9ee;background:#f8fafc;box-shadow:0 1px 2px rgba(36,144,255,.18)"></div><div class="t" style="left:374.20px;top:574.75px;font-size:15.5px;color:#253041;letter-spacing:0.067px;">Feb 10, 2026</div><div class="t" style="left:528.40px;top:574.75px;font-size:15.5px;color:#253041;letter-spacing:0.374px;">DEV26002</div><svg style="left:661.9px;top:561.3px" width="44" height="44" viewBox="0 0 44 44"><defs><clipPath id="avc2"><circle cx="22" cy="22" r="21.85"/></clipPath><filter id="avb2" x="-10%" y="-10%" width="120%" height="120%"><feGaussianBlur stdDeviation="0.6"/></filter><linearGradient id="avg2" x1="0" x2="1"><stop offset="0" stop-color="#7596a8"/><stop offset="1" stop-color="#8eabb9"/></linearGradient></defs><g clip-path="url(#avc2)"><rect width="44" height="44" fill="url(#avg2)"/><g filter="url(#avb2)">
<path d="M8.6 46 C6.6 32 7.4 15 12 7.6 C14.8 2.6 18.6 0.4 22.8 0.4 C27 0.4 30.8 2.6 33.4 7.6 C37.6 15 38.4 30 36.4 46 Z" fill="#1b1615"/>
<path d="M5 48 C6.5 40.5 11 38.6 16.4 36.6 L22.4 46 L29.6 36.6 C34 38.2 37.5 40.5 39 48 Z" fill="#1b1f2b"/>
<path d="M17.6 31 H27.4 L28.8 37.4 L22.6 46.5 L16 37.4 Z" fill="#d6a793"/>
<path d="M14.6 17.6 C14.6 9.6 18.2 5.6 23 5.6 C27.8 5.6 31.6 9.6 31.6 17.6 C31.6 25.6 27.8 32.4 23 32.4 C18.2 32.4 14.6 25.6 14.6 17.6 Z" fill="#e2baa6"/>
<path d="M14.4 19.6 C13 10.6 16.6 4.6 22.6 4.2 C20 7.6 16.4 11.6 14.4 19.6 Z M31.8 19.6 C33 10.6 29.6 4.6 22.6 4.2 C26 7.4 30 11.6 31.8 19.6 Z" fill="#1b1615"/>
<ellipse cx="19.2" cy="16.2" rx="1.3" ry=".55" fill="#2a1d1a"/><ellipse cx="26.4" cy="16.2" rx="1.3" ry=".55" fill="#2a1d1a"/>
<path d="M17 14.2 C18.2 13.6 19.8 13.6 21 14.2 M24.6 14.2 C25.8 13.6 27.4 13.6 28.6 14.2" stroke="#2a1d1a" stroke-width=".7" fill="none"/>
<path d="M20.6 25.4 C21.8 26.4 24 26.4 25.2 25.4 C24 24.8 21.8 24.8 20.6 25.4 Z" fill="#b9686a" stroke="#b9686a" stroke-width=".5"/>
</g></g></svg><div class="t" style="left:714.50px;top:566.75px;font-size:15.5px;color:#253041;letter-spacing:0.383px;">Sarah Thompson</div><div class="t" style="left:714.50px;top:587.75px;font-size:13.5px;color:#3d97e8;letter-spacing:0.197px;-webkit-text-stroke:0.2px #3d97e8;">Graphic Designer</div><div class="abs" style="left:931.1px;top:572.0px;width:69.8px;height:23px;border-radius:6.5px;background:#fee2e2;border:1px solid #fccfcf"></div><div class="t" style="left:942.70px;top:576.75px;font-size:13.5px;color:#9b1c1c;letter-spacing:-0.033px;font-weight:700;">Absent</div><div class="abs" style="left:1141.7px;top:583.2px;width:4.7px;height:1.6px;background:#4b5563"></div><div class="abs" style="left:1316.7px;top:583.2px;width:4.7px;height:1.6px;background:#4b5563"></div><div class="abs" style="left:1487.2px;top:583.2px;width:4.7px;height:1.6px;background:#4b5563"></div><div class="abs" style="left:1635.0px;top:583.2px;width:4.7px;height:1.6px;background:#4b5563"></div><div class="abs" style="left:1800.3px;top:583.2px;width:4.7px;height:1.6px;background:#4b5563"></div><div class="abs" style="left:1936.9px;top:583.2px;width:4.7px;height:1.6px;background:#4b5563"></div><div class="abs" style="left:336.7px;top:635.3px;width:17.6px;height:17.6px;border-radius:4.5px;border:1.4px solid #a5c9ee;background:#f8fafc;box-shadow:0 1px 2px rgba(36,144,255,.18)"></div><div class="t" style="left:374.20px;top:636.75px;font-size:15.5px;color:#253041;letter-spacing:0.067px;">Feb 10, 2026</div><div class="t" style="left:528.40px;top:636.75px;font-size:15.5px;color:#253041;letter-spacing:0.459px;">DEV26003</div><svg style="left:661.9px;top:623.3px" width="44" height="44" viewBox="0 0 44 44"><defs><clipPath id="avc3"><circle cx="22" cy="22" r="21.85"/></clipPath><filter id="avb3" x="-10%" y="-10%" width="120%" height="120%"><feGaussianBlur stdDeviation="0.6"/></filter></defs><g clip-path="url(#avc3)"><rect width="44" height="44" fill="#fdfdfd"/><g filter="url(#avb3)">
<path d="M10.6 37.4 C8.8 26 9.4 14 13.2 9 C15.6 5.6 18.8 4.2 22 4.2 C25.2 4.2 28.6 5.6 31 9 C34.8 14 35.4 26 33.6 37.4 Z" fill="#4b3028"/>
<path d="M4 48 C5.5 40 10 38 15.4 36 L22 44 L28.6 36 C34 38 38.5 40 40 48 Z" fill="#c7ad98"/>
<path d="M15.6 36 L20 48 H24 L28.4 36 L25.6 33.6 H18.4 Z" fill="#b9c5e2"/>
<path d="M18.8 29 H25.2 V35 L22 38 L18.8 35 Z" fill="#d3a48e"/>
<path d="M14.6 19 C14.6 12 17.8 8.8 21.9 8.8 C26 8.8 29.2 12 29.2 19 C29.2 26.4 26 32.2 21.9 32.2 C17.8 32.2 14.6 26.4 14.6 19 Z" fill="#e4bba5"/>
<path d="M14.4 21 C13.2 12.6 16.6 7.4 21.9 7.2 C19.4 10.4 16.2 13.8 14.4 21 Z M29.4 21 C30.6 12.6 27.4 7.4 21.9 7.2 C24.6 10.4 27.6 13.8 29.4 21 Z" fill="#4b3028"/>
<ellipse cx="18.9" cy="18.6" rx="1.1" ry=".55" fill="#33231d"/><ellipse cx="24.9" cy="18.6" rx="1.1" ry=".55" fill="#33231d"/>
<path d="M17 16.6 C18 16 19.6 16 20.6 16.6 M23.2 16.6 C24.2 16 25.8 16 26.8 16.6" stroke="#4b3028" stroke-width=".7" fill="none"/>
<path d="M19.2 25.6 C20.6 27.4 23.2 27.4 24.6 25.6 C23.2 26 20.6 26 19.2 25.6 Z" fill="#fbf2ef" stroke="#c4766e" stroke-width=".6"/>
</g></g></svg><div class="t" style="left:714.50px;top:628.75px;font-size:15.5px;color:#253041;letter-spacing:0.357px;">Olivia Martinez</div><div class="t" style="left:714.50px;top:649.75px;font-size:13.5px;color:#3d97e8;letter-spacing:0.195px;-webkit-text-stroke:0.2px #3d97e8;">Software Engineer</div><div class="abs" style="left:931.1px;top:634.0px;width:69.8px;height:23px;border-radius:6.5px;background:#fee2e2;border:1px solid #fccfcf"></div><div class="t" style="left:942.70px;top:638.75px;font-size:13.5px;color:#9b1c1c;letter-spacing:-0.033px;font-weight:700;">Absent</div><div class="abs" style="left:1141.7px;top:645.2px;width:4.7px;height:1.6px;background:#4b5563"></div><div class="abs" style="left:1316.7px;top:645.2px;width:4.7px;height:1.6px;background:#4b5563"></div><div class="abs" style="left:1487.2px;top:645.2px;width:4.7px;height:1.6px;background:#4b5563"></div><div class="abs" style="left:1635.0px;top:645.2px;width:4.7px;height:1.6px;background:#4b5563"></div><div class="abs" style="left:1800.3px;top:645.2px;width:4.7px;height:1.6px;background:#4b5563"></div><div class="abs" style="left:1936.9px;top:645.2px;width:4.7px;height:1.6px;background:#4b5563"></div><div class="t" style="left:336.50px;top:706.75px;font-size:15.5px;color:#4b5563;letter-spacing:0.460px;">Showing 1 to 4 of 4 entries</div><div class="abs" style="left:1642.3px;top:694.8px;width:123.6px;height:41px;border-radius:8.5px;border:1.2px solid #d7dbe1;background:#f8fafc"></div><div class="abs" style="left:1655px;top:693px;width:103.5px;height:6px;background:#f8fafc"></div><div class="t" style="left:1660.30px;top:687.75px;font-size:13.5px;color:#3b92e2;letter-spacing:0.182px;-webkit-text-stroke:0.4px #3b92e2;">Rows per page</div><div class="t" style="left:1660.20px;top:706.75px;font-size:16.5px;color:#253041;letter-spacing:-0.250px;">10</div><svg style="left:1741.7px;top:709.8px" width="12" height="12" viewBox="0 0 12 12"><path d="M2 4l4 4 4-4" fill="none" stroke="#1f2937" stroke-width="1.8" stroke-linecap="round" stroke-linejoin="round"/></svg><div class="t" style="left:1800.60px;top:708.50px;font-size:16px;color:#253041;letter-spacing:-0.250px;-webkit-text-stroke:0.2px #253041;">Page 1 of 1</div><div class="abs" style="left:1914.3px;top:698.2px;width:82.4px;height:34.6px;border-radius:7px;border:1px solid #e9ebef;background:#fff"></div><div class="t" style="left:1928.40px;top:708.75px;font-size:13.5px;color:#9ca3af;letter-spacing:0.167px;-webkit-text-stroke:0.25px #9ca3af;">Previous</div><div class="abs" style="left:2005.8px;top:698.2px;width:57px;height:34.6px;border-radius:7px;border:1px solid #e9ebef;background:#fff"></div><div class="t" style="left:2019.30px;top:708.75px;font-size:13.5px;color:#9ca3af;letter-spacing:0.445px;-webkit-text-stroke:0.25px #9ca3af;">Next</div>
<!--MAIN-END-->

<div id="frame"></div>
</div>
</body>
</html>
